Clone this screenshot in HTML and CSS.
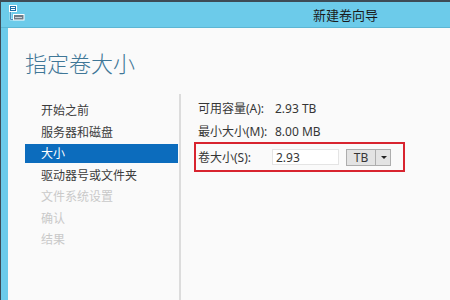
FILE: index.html
```html
<!DOCTYPE html>
<html lang="zh-CN">
<head>
  <meta charset="UTF-8">
  <title>新建卷向导</title>
  <link rel="stylesheet" href="styles.css">
</head>
<body>
  <div class="window">
    <div class="titlebar">
      <svg class="app-icon" width="16" height="16" viewBox="0 0 16 16">
        <rect x="0.5" y="0.5" width="7" height="6" fill="#1f70a8" stroke="#fff" stroke-width="1"/>
        <line x1="2" y1="2.5" x2="6" y2="2.5" stroke="#fff" stroke-width="1"/>
        <line x1="2" y1="4.5" x2="6" y2="4.5" stroke="#fff" stroke-width="1"/>
        <path d="M1.5 7 V14.5 H4" fill="none" stroke="#fff" stroke-width="1.5"/>
        <path d="M1.5 7 V14.5 H4" fill="none" stroke="#1f70a8" stroke-width="0.8"/>
        <rect x="4.5" y="9.5" width="10.5" height="5.5" fill="#6e7c88" stroke="#fff" stroke-width="1"/>
        <line x1="6" y1="12.5" x2="13" y2="12.5" stroke="#c9d0d6" stroke-width="1"/>
      </svg>
      <span class="title">新建卷向导</span>
    </div>

    <div class="frame">
      <h1 class="heading">指定卷大小</h1>

      <div class="columns">
        <ul class="steps">
          <li>开始之前</li>
          <li>服务器和磁盘</li>
          <li class="current">大小</li>
          <li>驱动器号或文件夹</li>
          <li class="disabled">文件系统设置</li>
          <li class="disabled">确认</li>
          <li class="disabled">结果</li>
        </ul>

        <div class="page">
          <div class="row">
            <span class="label">可用容量(A):</span>
            <span class="value">2.93 TB</span>
          </div>
          <div class="row short">
            <span class="label">最小大小(M):</span>
            <span class="value">8.00 MB</span>
          </div>
          <div class="row marked">
            <span class="label">卷大小(S):</span>
            <input class="size-input" type="text" value="2.93">
            <div class="unit-select">
              <span class="unit">TB</span>
              <span class="arrow"></span>
            </div>
          </div>
        </div>
      </div>
    </div>
  </div>
</body>
</html>
```

FILE: styles.css
```css
* {
  box-sizing: border-box;
}
body {
  margin: 0;
  font-family: "Noto Sans", "Noto Sans CJK SC", sans-serif;
  font-size: 12px;
  color: #363636;
  background: #fafafa;
}
.window {
  height: 300px;
  display: flex;
  flex-direction: column;
  border-left: 1px solid #3e4b56;
  overflow: hidden;
}
.titlebar {
  height: 28px;
  flex-shrink: 0;
  display: flex;
  align-items: center;
  background: #6ccbea;
  border-top: 2px solid #3e4b56;
  border-bottom: 1px solid #5cb6d4;
}
.app-icon {
  margin-left: 8px;
  margin-top: -3px;
}
.title {
  margin-left: 288px;
  font-size: 13px;
  color: #1b1b1b;
}
.frame {
  flex: 1;
  border-left: 7px solid #6ccbea;
  background: #fafafa;
  display: flex;
  flex-direction: column;
}
.heading {
  margin: 0;
  padding: 21px 0 0 17px;
  font-size: 22px;
  line-height: 28px;
  font-weight: 300;
  color: #3f7797;
}
.columns {
  flex: 1;
  display: flex;
  margin-top: 17px;
}
.steps {
  list-style: none;
  margin: 0;
  padding: 7px 1px 0 17px;
  width: 171px;
}
.steps li {
  height: 19px;
  line-height: 19px;
  margin-bottom: 2.5px;
  padding-left: 16px;
  white-space: nowrap;
  color: #3c3c3c;
}
.steps li.current {
  background: #0c6cbd;
  color: #fff;
}
.steps li.disabled {
  color: #c9c9c9;
}
.page {
  flex: 1;
  border-left: 2px solid #dcdcdc;
  padding: 2px 0 0 17px;
}
.row {
  display: flex;
  align-items: center;
  height: 24px;
}
.row.short {
  height: 22px;
}
.label {
  width: 74px;
  flex-shrink: 0;
  white-space: nowrap;
}
.value {
  padding-left: 3px;
}
.row.marked {
  height: 30px;
  width: 211px;
  margin-left: -4px;
  padding-left: 2px;
  border: 2px solid #d8242f;
}
.size-input {
  width: 67px;
  height: 16px;
  margin: 0;
  padding: 0 3px;
  border: 1px solid #e4e4e4;
  background: #fff;
  font: inherit;
  color: #363636;
  outline: none;
}
.unit-select {
  display: flex;
  margin-left: 7px;
  height: 17px;
  width: 45px;
  border: 1px solid #adadad;
  background: #e3e3e3;
}
.unit {
  width: 29px;
  line-height: 15px;
  text-align: center;
  border-right: 1px solid #adadad;
}
.arrow {
  flex: 1;
  position: relative;
}
.arrow::after {
  content: "";
  position: absolute;
  left: 5px;
  top: 6px;
  border-left: 3px solid transparent;
  border-right: 3px solid transparent;
  border-top: 3px solid #222;
}
```
